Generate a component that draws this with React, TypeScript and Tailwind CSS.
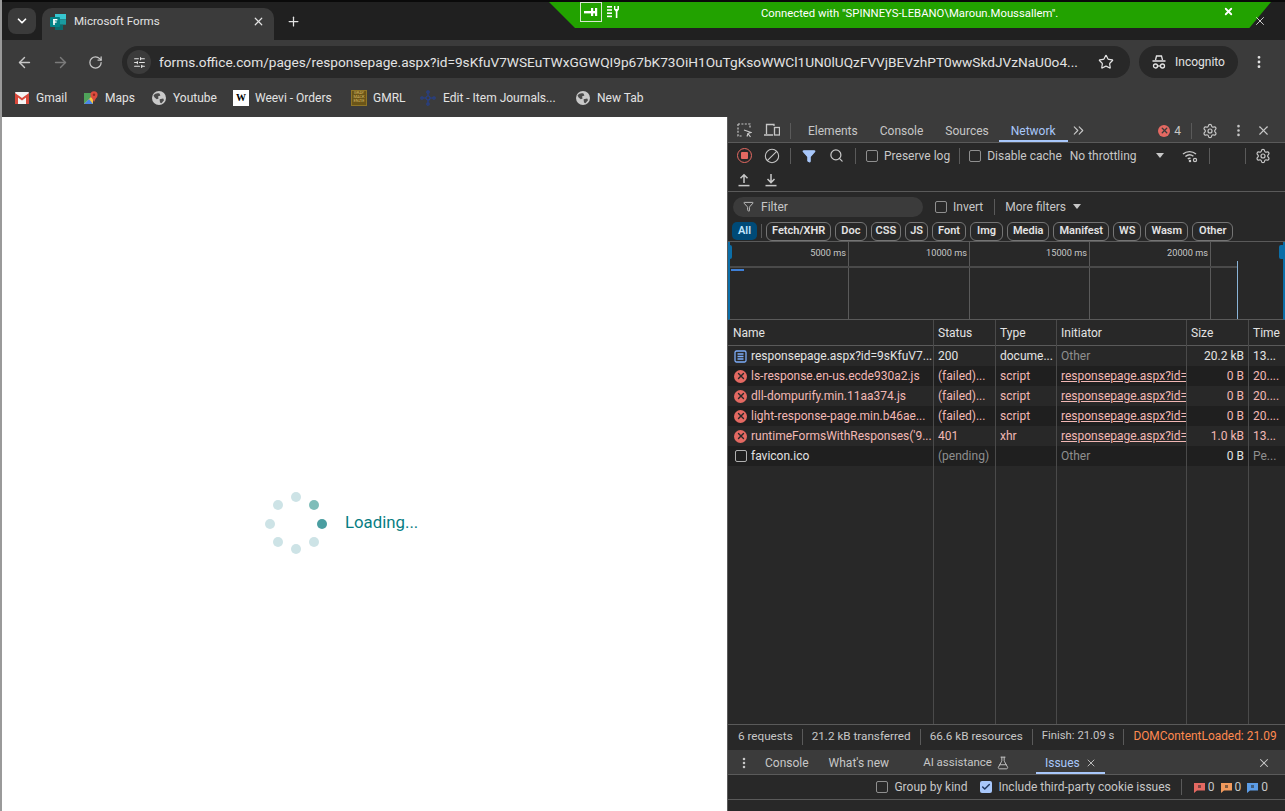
import React from 'react';
import { ChevronDown, X, Plus, ArrowLeft, ArrowRight, RotateCw, SlidersHorizontal, Star, MoreVertical, Search, Ban, Settings, Filter, ChevronsRight, FlaskConical, Check } from 'lucide-react';

const bookmarkClass = 'flex items-center gap-[7px] text-[12px] text-[#e3e3e3]';
const colsClass = 'grid grid-cols-[206px_62px_61px_130px_62px_1fr]';
const cellLine = 'border-r border-[#4a4a4a]';

function GlobeIcon() {
  return (
    <svg width="14" height="14" viewBox="0 0 14 14" className="shrink-0">
      <circle cx="7" cy="7" r="7" fill="#c9c9c9" />
      <path d="M1.5 4.5C3 2.5 5 2 7.5 2.6L8.4 4.6 6 5.4 6.6 7.4 4.8 8.2 2.6 6.4z" fill="#4a4a4a" />
      <path d="M7.6 8.2l3.6-.6.8 1.6-2.6 3-1.4-.6z" fill="#4a4a4a" />
    </svg>
  );
}

function FormsLogo() {
  return (
    <svg width="16" height="16" viewBox="0 0 16 16" className="shrink-0">
      <rect x="5" y="0" width="11" height="5.4" fill="#37c6d0" />
      <rect x="5" y="5.4" width="11" height="5.3" fill="#1a9ba1" />
      <rect x="5" y="10.7" width="8" height="5.3" fill="#0b6a6e" />
      <rect x="0" y="3" width="10" height="10" rx="1" fill="#038387" />
      <rect x="3.2" y="5" width="1.6" height="6" fill="#fff" />
      <rect x="3.2" y="5" width="4.2" height="1.4" fill="#fff" />
      <rect x="3.2" y="7.4" width="3.4" height="1.3" fill="#fff" />
    </svg>
  );
}

function Bookmarks() {
  return (
    <div className="h-[33px] bg-[#3b3b3b] flex items-center pl-[13px] pb-[6px]">
      <div className={`${bookmarkClass} w-[69px]`}>
        <svg width="14" height="12" viewBox="0 0 14 12">
          <rect x="0" y="0" width="14" height="12" rx="1" fill="#f4f4f4" />
          <path d="M0 1l7 5 7-5v11h-3V5.5L7 8.5 3 5.5V12H0z" fill="#d9483b" />
        </svg>
        Gmail
      </div>
      <div className={`${bookmarkClass} w-[68px]`}>
        <svg width="14" height="14" viewBox="0 0 14 14">
          <path d="M0 2h9v11H0z" fill="#4fa35a" />
          <path d="M0 13L9 4v9z" fill="#f6c644" />
          <path d="M0 13l5-5 4 5z" fill="#4a86e8" />
          <circle cx="10" cy="3.8" r="3.6" fill="#dd4b3e" />
          <circle cx="10" cy="3.8" r="1.2" fill="#8f2a21" />
          <path d="M7.4 6L10 11l2.6-5z" fill="#dd4b3e" />
        </svg>
        Maps
      </div>
      <div className={`${bookmarkClass} w-[81px]`}>
        <GlobeIcon />
        Youtube
      </div>
      <div className={`${bookmarkClass} w-[118px]`}>
        <span className="w-[16px] h-[16px] bg-white text-black flex items-center justify-center text-[10px] font-bold font-['Liberation_Serif',serif]">W</span>
        <span className="ml-[-1px]">Weevi - Orders</span>
      </div>
      <div className={`${bookmarkClass} w-[69px]`}>
        <span className="w-[16px] h-[16px] bg-[#6b5518] border border-[#8f7526] text-[4px] leading-[4px] text-[#d4b765] text-center overflow-hidden">GRAY<br />MACK<br />ENZIE</span>
        <span className="ml-[-1px]">GMRL</span>
      </div>
      <div className={`${bookmarkClass} w-[156px]`}>
        <svg width="16" height="16" viewBox="0 0 16 16" fill="none" stroke="#27408b" strokeWidth="1.2">
          <circle cx="8" cy="8" r="2" />
          <circle cx="8" cy="2" r="1.2" />
          <circle cx="8" cy="14" r="1.2" />
          <circle cx="2" cy="8" r="1.2" />
          <circle cx="14" cy="8" r="1.2" />
          <path d="M8 3.2V6M8 10v2.8M3.2 8H6M10 8h2.8" />
        </svg>
        Edit - Item Journals...
      </div>
      <div className={bookmarkClass}>
        <GlobeIcon />
        New Tab
      </div>
    </div>
  );
}

function ConnectionBanner() {
  return (
    <div className="absolute left-[547px] top-[2px] w-[722px] h-[26px] bg-[#22a200] [clip-path:polygon(0_0,100%_0,97%_100%,3.6%_100%)] text-white">
      <div className="absolute left-[31px] top-0 w-[22px] h-[20px] border border-[#d8e8d0] flex items-center justify-center">
        <svg width="14" height="8" viewBox="0 0 14 8" fill="#fff">
          <rect x="0" y="3" width="13" height="2.4" />
          <rect x="7" y="0" width="2.2" height="8" />
          <rect x="11" y="0" width="2.2" height="8" />
        </svg>
      </div>
      <svg className="absolute left-[58px] top-[4px]" width="14" height="12" viewBox="0 0 14 12" fill="#fff">
        <rect x="0" y="0" width="5" height="1.6" />
        <rect x="0" y="3.2" width="5" height="1.6" />
        <rect x="0" y="6.4" width="5" height="1.6" />
        <rect x="0" y="9.6" width="5" height="1.6" />
        <path d="M7 0h1.4v3h2V0H12v3.6L10.4 5.4V12H8.8V5.4L7 3.6z" />
      </svg>
      <span className="absolute left-[212px] top-[5px] text-[11.3px] leading-[14px] whitespace-nowrap">Connected with "SPINNEYS-LEBANO\Maroun.Moussallem".</span>
      <X className="absolute left-[674px] top-[4px]" size={11} strokeWidth={4} />
    </div>
  );
}

function BrowserChrome() {
  return (
    <div className="shrink-0">
      <div className="h-[38px] bg-[#202020] flex items-end pl-[6px]">
        <div className="w-[28px] h-[26px] mb-[6px] rounded-lg bg-[#3b3b3b] flex items-center justify-center text-white">
          <ChevronDown size={14} strokeWidth={3} />
        </div>
        <div className="ml-[6px] w-[232px] h-[32px] rounded-t-[10px] bg-[#3b3b3b] flex items-center pl-[8px] pr-[9px] pb-[5px] gap-[8px] text-[11.6px] text-[#e3e3e3]">
          <FormsLogo />
          <span className="flex-1">Microsoft Forms</span>
          <X size={13} strokeWidth={2.2} className="text-[#e3e3e3]" />
        </div>
        <Plus size={15} strokeWidth={2} className="ml-[12px] mb-[11px] text-[#e3e3e3]" />
      </div>
      <div className="h-[44px] bg-[#3b3b3b] flex items-center pl-[14px] pr-[18px] text-[#c7c7c7]">
        <ArrowLeft size={17} strokeWidth={2} className="shrink-0" />
        <ArrowRight size={17} strokeWidth={2} className="ml-[19px] text-[#7b7b7b] shrink-0" />
        <RotateCw size={15} strokeWidth={2} className="ml-[19px] shrink-0" />
        <div className="ml-[19px] min-w-0 flex-1 h-[32px] rounded-full bg-[#282828] flex items-center pl-[5px] pr-[16px] mr-[9px]">
          <span className="w-[24px] h-[24px] rounded-full bg-[#3b3b3b] flex items-center justify-center text-[#e3e3e3] shrink-0">
            <SlidersHorizontal size={13} strokeWidth={2} />
          </span>
          <span className="ml-[8px] min-w-0 flex-1 text-[13.67px] text-[#e3e3e3] whitespace-nowrap overflow-hidden">forms.office.com/pages/responsepage.aspx?id=9sKfuV7WSEuTWxGGWQI9p67bK73OiH1OuTgKsoWWCl1UN0lUQzFVVjBEVzhPT0wwSkdJVzNaU0o4...</span>
          <Star size={16} strokeWidth={1.8} className="ml-[19px] text-[#e3e3e3] shrink-0" />
        </div>
        <div className="w-[99px] h-[32px] rounded-full bg-[#282828] flex items-center pl-[12px] gap-[8px] text-[12px] text-[#e3e3e3] shrink-0">
          <svg width="16" height="16" viewBox="0 0 16 16" fill="none" stroke="#e3e3e3" strokeWidth="1.3">
            <path d="M4.5 6l1-4h5l1 4M1.5 7h13" />
            <circle cx="4.5" cy="12" r="2" />
            <circle cx="11.5" cy="12" r="2" />
            <path d="M6.5 12h3" />
          </svg>
          Incognito
        </div>
        <MoreVertical size={16} strokeWidth={2.2} className="ml-[13px] text-[#e3e3e3] shrink-0" />
      </div>
      <Bookmarks />
    </div>
  );
}

function Spinner() {
  const dots = [
    { c: 'left-[47px] top-[27px] bg-[#4a9ea1]' },
    { c: 'left-[39px] top-[8px] bg-[#7fbdb9]' },
    { c: 'left-[21px] top-0 bg-[#cde3e6]' },
    { c: 'left-[3px] top-[8px] bg-[#cde3e6]' },
    { c: 'left-[-5px] top-[27px] bg-[#cde3e6]' },
    { c: 'left-[3px] top-[45px] bg-[#cde3e6]' },
    { c: 'left-[21px] top-[52px] bg-[#cde3e6]' },
    { c: 'left-[39px] top-[45px] bg-[#cde3e6]' },
  ];
  return (
    <div className="relative w-[52px] h-[62px]">
      {dots.map((d, i) => (
        <span key={i} className={`absolute w-[10px] h-[10px] rounded-full ${d.c}`} />
      ))}
    </div>
  );
}

function PageArea() {
  return (
    <div className="flex-1 bg-white flex items-center">
      <div className="flex items-center ml-[268px] mt-[118px]">
        <Spinner />
        <span className="ml-[23px] text-[16.8px] text-[#077d83]">Loading...</span>
      </div>
    </div>
  );
}

function Check13({ checked }: { checked?: boolean }) {
  if (checked) {
    return (
      <span className="w-[12px] h-[12px] rounded-[2px] bg-[#a8c7fa] flex items-center justify-center text-[#1f3760] shrink-0">
        <Check size={10} strokeWidth={3.5} />
      </span>
    );
  }
  return <span className="w-[12px] h-[12px] rounded-[2px] border border-[#8f8f8f] shrink-0" />;
}

function DevtoolsHeader() {
  const tabs = ['Elements', 'Console', 'Sources'];
  return (
    <div className="h-[26px] bg-[#3b3b3b] border-b border-[#5a5a5a] flex items-center pt-[2px] text-[#c7c7c7] text-[12px]">
      <svg className="ml-[9px]" width="15" height="15" viewBox="0 0 15 15" fill="none" stroke="#c7c7c7" strokeWidth="1.2" strokeDasharray="2 1.4">
        <path d="M1 1h12v5M1 1v12h5" />
        <path d="M7 7l7 2.5-3 1 2.5 3.5M11 10.5l-1 3z" strokeDasharray="none" />
      </svg>
      <svg className="ml-[12px]" width="16" height="15" viewBox="0 0 16 15" fill="none" stroke="#c7c7c7" strokeWidth="1.3">
        <path d="M10 3V1.5H2.5V11M0 12h9" />
        <rect x="10.5" y="4.5" width="5" height="7.5" />
      </svg>
      <span className="ml-[10px] w-px h-[16px] bg-[#5a5a5a]" />
      <div className="flex ml-[17px] gap-[22px]">
        {tabs.map((t) => (
          <span key={t}>{t}</span>
        ))}
      </div>
      <span className="relative ml-[22px] text-[#a8c7fa] h-full flex items-center">
        Network
        <span className="absolute left-[-12px] right-[-12px] bottom-0 h-[2px] bg-[#a8c7fa]" />
      </span>
      <ChevronsRight size={17} strokeWidth={1.6} className="ml-[14px]" />
      <span className="ml-auto flex items-center gap-[4px]">
        <span className="w-[12px] h-[12px] rounded-full bg-[#e46962] text-[#3b3b3b] flex items-center justify-center">
          <X size={9} strokeWidth={3.5} />
        </span>
        4
      </span>
      <span className="ml-[10px] w-px h-[16px] bg-[#5a5a5a]" />
      <Settings size={16} strokeWidth={1.8} className="ml-[10px]" />
      <MoreVertical size={15} strokeWidth={2.2} className="ml-[13px]" />
      <X size={15} strokeWidth={1.8} className="ml-[10px] mr-[14px]" />
    </div>
  );
}

function BarArrow({ up }: { up?: boolean }) {
  return (
    <svg width="14" height="14" viewBox="0 0 14 14" fill="none" stroke="#c7c7c7" strokeWidth="1.5">
      <path d="M1.5 12.6h11" />
      <path d={up ? 'M7 10V2M3.5 5.2L7 1.8l3.5 3.4' : 'M7 1v8M3.5 6L7 9.6 10.5 6'} />
    </svg>
  );
}

function NetworkToolbar() {
  return (
    <div className="bg-[#282828] border-b border-[#5a5a5a] text-[#c7c7c7] text-[12px]">
      <div className="h-[25px] flex items-center pl-[9px]">
        <span className="w-[15px] h-[15px] rounded-full border-[1.5px] border-[#e46962] flex items-center justify-center">
          <span className="w-[7px] h-[7px] rounded-[1px] bg-[#e46962]" />
        </span>
        <Ban size={16} strokeWidth={1.6} className="ml-[12px] -scale-x-100" />
        <span className="ml-[10px] w-px h-[16px] bg-[#5a5a5a]" />
        <Filter size={14} className="ml-[11px] text-[#a8c7fa] fill-[#a8c7fa]" />
        <Search size={15} strokeWidth={2} className="ml-[13px]" />
        <span className="ml-[11px] w-px h-[16px] bg-[#5a5a5a]" />
        <span className="ml-[10px] flex items-center gap-[6px]"><Check13 />Preserve log</span>
        <span className="ml-[9px] w-px h-[16px] bg-[#5a5a5a]" />
        <span className="ml-[9px] flex items-center gap-[6px]"><Check13 />Disable cache</span>
        <span className="ml-[8px]">No throttling</span>
        <span className="ml-[19px] w-0 h-0 border-x-[4px] border-x-transparent border-t-[5px] border-t-[#c7c7c7]" />
        <svg className="ml-[18px]" width="16" height="14" viewBox="0 0 16 14" fill="none" stroke="#c7c7c7" strokeWidth="1.4">
          <path d="M1 5a10 10 0 0 1 13 0M3.4 7.6a6.4 6.4 0 0 1 8-.4M5.8 10a3 3 0 0 1 2.8-.6" />
          <circle cx="8" cy="12" r="0.6" fill="#c7c7c7" />
          <circle cx="13" cy="11" r="1.6" strokeWidth="1.2" />
        </svg>
        <span className="ml-[11px] w-px h-[16px] bg-[#5a5a5a]" />
        <span className="ml-[35px] w-px h-[16px] bg-[#5a5a5a]" />
        <Settings size={16} strokeWidth={1.8} className="ml-[9px]" />
      </div>
      <div className="h-[23px] flex items-center pl-[9px]">
        <BarArrow up />
        <span className="ml-[13px]"><BarArrow /></span>
      </div>
    </div>
  );
}

const chips = [
  { label: 'Fetch/XHR', cls: 'px-[5px]' },
  { label: 'Doc', cls: 'px-[5px]' },
  { label: 'CSS', cls: 'px-[4px]' },
  { label: 'JS', cls: 'px-[4px]' },
  { label: 'Font', cls: 'px-[5px]' },
  { label: 'Img', cls: 'px-[6px]' },
  { label: 'Media', cls: 'px-[5px]' },
  { label: 'Manifest', cls: 'px-[5px]' },
  { label: 'WS', cls: 'px-[5px]' },
  { label: 'Wasm', cls: 'px-[5px]' },
  { label: 'Other', cls: 'px-[6px]' },
];

function FilterBar() {
  return (
    <div className="bg-[#282828] border-b border-[#5a5a5a] text-[#c7c7c7] text-[12px]">
      <div className="h-[27px] flex items-center pl-[5px] pt-[2px]">
        <div className="w-[190px] h-[20px] rounded-full bg-[#3b3b3b] flex items-center pl-[10px] gap-[7px] text-[#c7c7c7]">
          <Filter size={11} strokeWidth={2} />
          Filter
        </div>
        <span className="ml-[12px] flex items-center gap-[6px]"><Check13 />Invert</span>
        <span className="ml-[11px] w-px h-[16px] bg-[#5a5a5a]" />
        <span className="ml-[10px]">More filters</span>
        <span className="ml-[7px] w-0 h-0 border-x-[4px] border-x-transparent border-t-[5px] border-t-[#c7c7c7]" />
      </div>
      <div className="h-[22px] flex items-center pl-[4px] pt-[2px] text-[11px] font-semibold text-[#e3e3e3]">
        <span className="h-[18px] w-[25px] rounded-[5px] bg-[#004a77] text-[#c2e7ff] flex items-center justify-center">All</span>
        <span className="ml-[4px] w-px h-[14px] bg-[#5a5a5a]" />
        <div className="ml-[4px] flex gap-[4px]">
          {chips.map((c) => (
            <span key={c.label} className={`h-[19px] rounded-[6px] border border-[#757575] flex items-center ${c.cls}`}>{c.label}</span>
          ))}
        </div>
      </div>
    </div>
  );
}

const overviewCells = [
  { label: '5000 ms', cls: 'w-[119px]' },
  { label: '10000 ms', cls: 'w-[121px]' },
  { label: '15000 ms', cls: 'w-[120px]' },
  { label: '20000 ms', cls: 'w-[121px]' },
];

function Overview() {
  return (
    <div className="relative h-[78px] shrink-0 bg-[#282828] border-b border-[#5a5a5a] border-x-2 border-x-[#0b6ea8] flex">
      {overviewCells.map((l) => (
        <div key={l.label} className={`${l.cls} border-r border-[#5a5a5a] text-right pr-[2px] pt-[4px] text-[9.2px] leading-[14px] text-[#c7c7c7]`}>{l.label}</div>
      ))}
      <span className="absolute left-0 right-[46px] top-[24px] h-[2px] bg-[#4a4a4a]" />
      <span className="absolute left-[1px] top-[27px] w-[13px] h-[2px] bg-[#3e7fd6]" />
      <span className="absolute left-[507px] top-[19px] bottom-0 w-px bg-[#8ab4d8]" />
      <span className="absolute left-[-2px] top-[3px] w-[4px] h-[14px] rounded-r-[2px] bg-[#0b6ea8]" />
      <span className="absolute right-[-2px] top-[3px] w-[6px] h-[14px] rounded-l-[2px] bg-[#0b6ea8]" />
    </div>
  );
}

type Row = {
  name: string;
  status: string;
  type: string;
  initiator: string;
  size: string;
  time: string;
  kind: 'doc' | 'error' | 'blank';
};

const rows: Row[] = [
  { name: 'responsepage.aspx?id=9sKfuV7...', status: '200', type: 'docume...', initiator: 'Other', size: '20.2 kB', time: '13...', kind: 'doc' },
  { name: 'ls-response.en-us.ecde930a2.js', status: '(failed)...', type: 'script', initiator: 'responsepage.aspx?id=', size: '0 B', time: '20....', kind: 'error' },
  { name: 'dll-dompurify.min.11aa374.js', status: '(failed)...', type: 'script', initiator: 'responsepage.aspx?id=', size: '0 B', time: '20....', kind: 'error' },
  { name: 'light-response-page.min.b46ae...', status: '(failed)...', type: 'script', initiator: 'responsepage.aspx?id=', size: '0 B', time: '20....', kind: 'error' },
  { name: "runtimeFormsWithResponses('9...", status: '401', type: 'xhr', initiator: 'responsepage.aspx?id=', size: '1.0 kB', time: '13...', kind: 'error' },
  { name: 'favicon.ico', status: '(pending)', type: '', initiator: 'Other', size: '0 B', time: 'Pe...', kind: 'blank' },
];

function RowIcon({ kind }: { kind: Row['kind'] }) {
  if (kind === 'doc') {
    return (
      <svg width="13" height="13" viewBox="0 0 13 13" fill="none" stroke="#7cacf8" strokeWidth="1.3" className="shrink-0">
        <rect x="1" y="1" width="11" height="11" rx="1.5" />
        <path d="M3.5 4h6M3.5 6.5h6M3.5 9h6" />
      </svg>
    );
  }
  if (kind === 'error') {
    return (
      <span className="w-[13px] h-[13px] rounded-full bg-[#e46962] text-[#282828] flex items-center justify-center shrink-0">
        <X size={10} strokeWidth={3.2} />
      </span>
    );
  }
  return <span className="w-[12px] h-[12px] ml-[1px] rounded-[2px] border border-[#b0b0b0] shrink-0" />;
}

function RequestRow({ row, index }: { row: Row; index: number }) {
  const failed = row.kind === 'error';
  const text = failed ? 'text-[#f2b8b5]' : 'text-[#e3e3e3]';
  const bg = index % 2 === 1 ? 'bg-[#1f1f1f]' : 'bg-[#282828]';
  const isLink = row.initiator !== 'Other';
  return (
    <div className={`${colsClass} h-[20px] text-[12px] leading-[20px] ${bg} ${text}`}>
      <div className={`${cellLine} flex items-center gap-[4px] pl-[6px] whitespace-nowrap overflow-hidden`}>
        <RowIcon kind={row.kind} />
        <span>{row.name}</span>
      </div>
      <div className={`${cellLine} pl-[4px] whitespace-nowrap overflow-hidden ${row.kind === 'blank' ? 'text-[#8f8f8f]' : ''}`}>{row.status}</div>
      <div className={`${cellLine} pl-[4px] whitespace-nowrap overflow-hidden`}>{row.type}</div>
      <div className={`${cellLine} pl-[4px] whitespace-nowrap overflow-hidden ${isLink ? 'underline' : 'text-[#8f8f8f]'}`}>{row.initiator}</div>
      <div className={`${cellLine} pr-[4px] text-right whitespace-nowrap overflow-hidden`}>{row.size}</div>
      <div className={`pl-[4px] whitespace-nowrap overflow-hidden ${row.kind === 'blank' ? 'text-[#8f8f8f]' : ''}`}>{row.time}</div>
    </div>
  );
}

function RequestTable() {
  const heads = ['Name', 'Status', 'Type', 'Initiator', 'Size', 'Time'];
  return (
    <div className="flex-1 min-h-0 flex flex-col bg-[#282828] border-b border-[#5a5a5a]">
      <div className={`${colsClass} h-[26px] shrink-0 bg-[#282828] border-b border-[#5a5a5a] text-[12px] leading-[27px] text-[#e3e3e3]`}>
        {heads.map((h, i) => (
          <div key={h} className={`${i === 0 ? 'pl-[5px]' : 'pl-[4px]'} ${i < 5 ? cellLine : ''}`}>{h}</div>
        ))}
      </div>
      {rows.map((r, i) => (
        <RequestRow key={r.name} row={r} index={i} />
      ))}
      <div className={`${colsClass} flex-1`}>
        <div className={cellLine} />
        <div className={cellLine} />
        <div className={cellLine} />
        <div className={cellLine} />
        <div className={cellLine} />
        <div />
      </div>
    </div>
  );
}

function StatusBar() {
  const items = ['6 requests', '21.2 kB transferred', '66.6 kB resources'];
  return (
    <div className="h-[25px] shrink-0 bg-[#282828] flex items-center pl-[10px] pb-[2px] text-[11.7px] text-[#c7c7c7] whitespace-nowrap">
      {items.map((t) => (
        <React.Fragment key={t}>
          <span>{t}</span>
          <span className="mx-[9px] w-px h-[16px] bg-[#5a5a5a] shrink-0" />
        </React.Fragment>
      ))}
      <span className="text-[11.3px]">Finish: 21.09 s</span>
      <span className="mx-[9px] w-px h-[16px] bg-[#5a5a5a] shrink-0" />
      <span className="text-[11.9px] text-[#ff8a50]">DOMContentLoaded: 21.09</span>
    </div>
  );
}

function IssueCount({ fill }: { fill: string }) {
  return (
    <svg width="11" height="11" viewBox="0 0 11 11" className="shrink-0">
      <path d="M0 1h11v7.5H3L0 11z" fill={fill} />
      <rect x="4" y="3" width="3" height="3" fill="#282828" opacity="0.55" />
    </svg>
  );
}

function Drawer() {
  return (
    <div className="shrink-0">
      <div className="h-[25px] bg-[#3b3b3b] border-b border-[#5a5a5a] flex items-center pt-[2px] text-[12px] text-[#c7c7c7]">
        <MoreVertical size={14} strokeWidth={2.4} className="ml-[9px]" />
        <span className="ml-[14px]">Console</span>
        <span className="ml-[20px]">What's new</span>
        <span className="ml-[34px] text-[11.5px]">AI assistance</span>
        <FlaskConical size={14} strokeWidth={1.6} className="ml-[4px]" />
        <span className="relative ml-[35px] h-full flex items-center text-[#a8c7fa]">
          Issues
          <span className="absolute left-[-9px] right-[-25px] bottom-0 h-[2px] bg-[#a8c7fa]" />
        </span>
        <X size={12} strokeWidth={1.8} className="ml-[5px]" />
        <X size={14} strokeWidth={1.8} className="ml-auto mr-[14px]" />
      </div>
      <div className="h-[25px] bg-[#282828] border-b border-[#5a5a5a] flex items-center justify-end pr-[17px] text-[12px] text-[#c7c7c7]">
        <Check13 />
        <span className="ml-[6px]">Group by kind</span>
        <span className="ml-[13px]"><Check13 checked /></span>
        <span className="ml-[6px]">Include third-party cookie issues</span>
        <span className="ml-[10px] w-px h-[16px] bg-[#5a5a5a]" />
        <span className="ml-[12px]"><IssueCount fill="#e46962" /></span>
        <span className="ml-[3px]">0</span>
        <span className="ml-[6px]"><IssueCount fill="#f29a5c" /></span>
        <span className="ml-[3px]">0</span>
        <span className="ml-[6px]"><IssueCount fill="#5c9ce6" /></span>
        <span className="ml-[3px]">0</span>
      </div>
      <div className="h-[11px] bg-[#282828]" />
    </div>
  );
}

export default function App() {
  return (
    <div className="relative w-[1285px] h-[811px] overflow-hidden bg-[#1a1a1a] border-l-2 border-l-[#9a9a9a] flex flex-col font-['Roboto','Open_Sans',sans-serif]">
      <div className="h-[2px] bg-[#0a0a0a] shrink-0" />
      <BrowserChrome />
      <div className="flex-1 min-h-0 flex">
        <PageArea />
        <div className="w-[558px] shrink-0 flex flex-col bg-[#282828] border-l border-[#5a5a5a]">
          <DevtoolsHeader />
          <NetworkToolbar />
          <FilterBar />
          <Overview />
          <RequestTable />
          <StatusBar />
          <Drawer />
        </div>
      </div>
      <ConnectionBanner />
      <X size={14} strokeWidth={1.5} className="absolute left-[1251px] top-[14px] text-[#e3e3e3]" />
    </div>
  );
}
